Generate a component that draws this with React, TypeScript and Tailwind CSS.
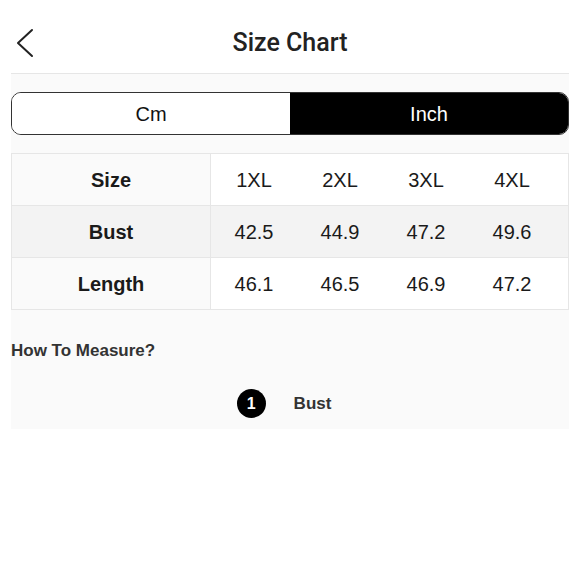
const sizes = ['1XL', '2XL', '3XL', '4XL'];

const rows = [
  { label: 'Bust', values: ['42.5', '44.9', '47.2', '49.6'], shaded: true },
  { label: 'Length', values: ['46.1', '46.5', '46.9', '47.2'], shaded: false },
];

export default function App() {
  return (
    <div className="w-[580px] h-[580px] bg-white text-[#1a1a1a] font-['Liberation_Sans',Arial,sans-serif]">
      {/* Header */}
      <div className="relative h-[73px] flex items-center justify-center">
        <button className="absolute left-[15px] top-[28px] text-[#222]">
          <svg width="20" height="30" viewBox="0 0 20 30" fill="none">
            <polyline
              points="17,2 3,15 17,28"
              stroke="currentColor"
              strokeWidth="2"
              strokeLinecap="round"
              strokeLinejoin="round"
            />
          </svg>
        </button>
        <h1 className="text-[25px] font-medium text-[#222] font-['Roboto',sans-serif] pt-[13px]">
          Size Chart
        </h1>
      </div>

      {/* Content */}
      <div className="mx-[11px] bg-[#fafafa] border-t border-[#e6e6e6] pt-[18px] pb-[11px]">
        {/* Unit toggle */}
        <div className="flex h-[43px] rounded-[10px] border-[1.5px] border-[#333] overflow-hidden text-[20px]">
          <div className="flex-1 bg-white flex items-center justify-center text-[#111]">Cm</div>
          <div className="flex-1 bg-black flex items-center justify-center text-white">Inch</div>
        </div>

        {/* Size table */}
        <div className="mt-[18px] border border-[#e6e6e6] text-[20px]">
          <div className="flex h-[51px]">
            <div className="w-[199px] bg-[#fafafa] border-r border-[#e6e6e6] flex items-center justify-center font-bold">
              Size
            </div>
            {sizes.map((s) => (
              <div key={s} className="w-[86px] flex items-center justify-center bg-white">
                {s}
              </div>
            ))}
            <div className="flex-1 bg-white" />
          </div>
          {rows.map((row) => (
            <div
              key={row.label}
              className={`flex h-[52px] border-t border-[#e6e6e6] ${row.shaded ? 'bg-[#f3f3f3]' : 'bg-white'}`}
            >
              <div
                className={`w-[199px] border-r border-[#e6e6e6] flex items-center justify-center font-bold ${
                  row.shaded ? 'bg-[#f3f3f3]' : 'bg-[#fafafa]'
                }`}
              >
                {row.label}
              </div>
              {row.values.map((v, i) => (
                <div key={i} className="w-[86px] flex items-center justify-center">
                  {v}
                </div>
              ))}
              <div className="flex-1" />
            </div>
          ))}
        </div>

        {/* How to measure */}
        <h2 className="mt-[31px] text-[17px] leading-[20px] font-bold text-[#333]">How To Measure?</h2>
        <div className="mt-[28px] flex items-center justify-center gap-[28px] pr-[12px]">
          <span className="w-[29px] h-[29px] rounded-full bg-black text-white text-[16px] font-bold flex items-center justify-center">
            1
          </span>
          <span className="text-[17px] font-bold text-[#333]">Bust</span>
        </div>
      </div>
    </div>
  );
}
